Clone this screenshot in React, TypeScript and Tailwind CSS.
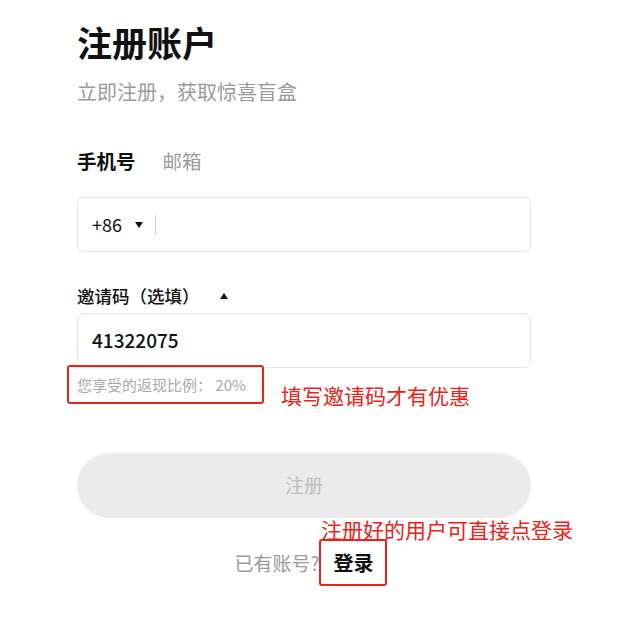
export default function App() {
  return (
    <div
      className="relative w-[625px] h-[620px] bg-white overflow-hidden"
      style={{ fontFamily: '"Noto Sans CJK SC", "Noto Sans", sans-serif' }}
    >
      <div className="ml-[77px] w-[454px] pt-[20px]">
        <h1 className="text-[35px] leading-[44px] font-bold text-[#111]">注册账户</h1>
        <p className="mt-[14px] text-[20px] leading-[28px] text-[#9a9a9a]">立即注册，获取惊喜盲盒</p>

        {/* Tabs */}
        <div className="mt-[40px] flex items-center gap-[27px] h-[30px] text-[19.5px]">
          <span className="font-bold text-[#111]">手机号</span>
          <span className="text-[#9a9a9a]">邮箱</span>
        </div>

        {/* Phone */}
        <div className="mt-[21px] h-[55px] rounded-[6px] border border-[#e6e6e6] flex items-center px-[14px]">
          <span className="text-[18px] text-[#111]">+86</span>
          <span className="ml-[13px] w-0 h-0 border-l-[4px] border-r-[4px] border-t-[6px] border-l-transparent border-r-transparent border-t-[#111]" />
          <span className="ml-[12px] w-[1px] h-[20px] bg-[#ccc]" />
        </div>

        {/* Invite code */}
        <div className="mt-[32px] h-[24px] flex items-center text-[17.5px] text-[#111]">
          <span className="font-medium">邀请码（选填）</span>
          <span className="ml-[20px] w-0 h-0 border-l-[4px] border-r-[4px] border-b-[6px] border-l-transparent border-r-transparent border-b-[#111]" />
        </div>
        <div className="mt-[5px] h-[55px] rounded-[6px] border border-[#e6e6e6] flex items-center px-[14px]">
          <span className="text-[19px] font-medium text-[#111]">41322075</span>
        </div>
        <div className="mt-[6px] h-[22px] leading-[22px] text-[15px] text-[#a8a8a8]">您享受的返现比例：&nbsp;20%</div>

        {/* Submit */}
        <button className="mt-[57px] w-full h-[65px] rounded-full bg-[#ebebeb] text-[19px] text-[#bdbdbd]">注册</button>

        <div className="mt-[30px] h-[30px] flex items-center justify-center text-[19px]">
          <span className="text-[#9a9a9a]">已有账号?</span>
          <span className="ml-[14px] text-[20px] font-bold text-[#111]">登录</span>
        </div>
      </div>

      {/* Annotations */}
      <div className="absolute left-[67px] top-[365px] w-[197px] h-[39px] border-2 border-[#e8231a] rounded-[3px]" />
      <div className="absolute left-[281px] top-[381px] text-[21px] leading-[28px] text-[#e8231a]">填写邀请码才有优惠</div>
      <div className="absolute left-[321px] top-[515px] text-[21px] leading-[28px] text-[#e8231a]">注册好的用户可直接点登录</div>
      <div className="absolute left-[319px] top-[539px] w-[68px] h-[47px] border-2 border-[#e8231a] rounded-[3px]" />
    </div>
  )
}
